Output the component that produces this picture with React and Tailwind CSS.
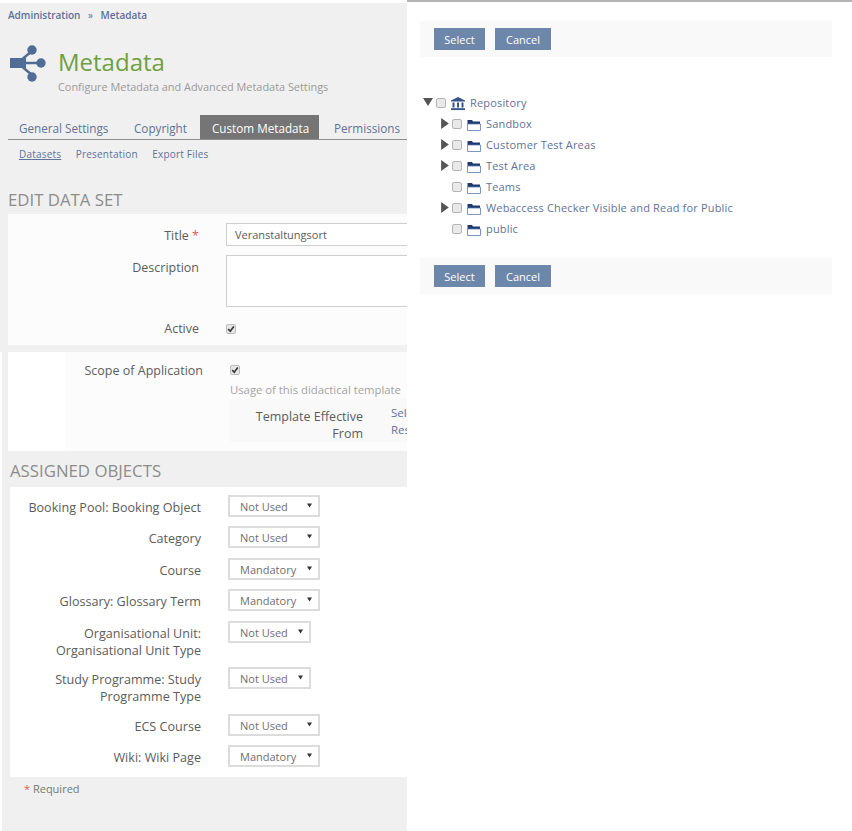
import React from 'react';

const FONT = "font-['Open_Sans',sans-serif]";

// checkbox with check mark (left form) or empty (tree)
function Check({ checked, className = '' }) {
  if (checked) {
    return (
      <span className={`flex w-[10px] h-[10px] items-center justify-center rounded-[2px] border border-[#bdbdbd] bg-[#e6e6e6] ${className}`}>
        <svg viewBox="0 0 10 10" className="w-[8px] h-[8px]">
          <path d="M1.5 5 L4 7.8 L8.5 1.8" fill="none" stroke="#333" strokeWidth="2" />
        </svg>
      </span>
    );
  }
  return <span className={`block w-[10px] h-[10px] rounded-[2px] border border-[#b5b5b5] bg-[#e9e9e9] ${className}`} />;
}

function Select({ value, wide = true }) {
  return (
    <div className={`flex items-center justify-between h-[22px] border-2 border-[#dcdcdc] bg-white pl-[10px] text-[11px] text-[#6f6f6f] ${wide ? 'w-[92px] pr-[6px]' : 'w-[83px] pr-[6px]'}`}>
      <span className="pt-[2px]">{value}</span>
      <svg viewBox="0 0 6 5" className="w-[5px] h-[5px] mb-[2px]"><path d="M0 0H6L3 5Z" fill="#333" /></svg>
    </div>
  );
}

function AssignedRow({ label, value, wide, h }) {
  return (
    <div className="flex" style={{ height: h }}>
      <div className="w-[191px] pt-[4px] text-right text-[12.6px] leading-[17px] text-[#5c5c5c]">{label}</div>
      <div className="ml-[27px]"><Select value={value} wide={wide} /></div>
    </div>
  );
}

function Toolbar() {
  return (
    <div className="flex gap-[10px] h-[36px] items-center px-[14px] bg-[#f9f9f9]">
      <button className="w-[51px] h-[22px] pt-[2px] bg-[#6d87ab] text-[11px] text-white">Select</button>
      <button className="w-[56px] h-[22px] pt-[2px] bg-[#6d87ab] text-[11px] text-white">Cancel</button>
    </div>
  );
}

function Folder() {
  return (
    <svg viewBox="0 0 14 12" className="w-[14px] h-[12px] shrink-0">
      <path d="M0.5 1H5L6 2.5H13V5H0.5Z" fill="#1c3a70" />
      <path d="M0.5 5H13.5V11.5H0.5Z" fill="#fff" stroke="#5a7cae" strokeWidth="0.8" />
    </svg>
  );
}

function Bank() {
  return (
    <svg viewBox="0 0 14 13" className="w-[14px] h-[13px] shrink-0" fill="#34548a">
      <path d="M7 0L14 3.4V4.5H0V3.4Z" />
      <rect x="1.5" y="5.5" width="2" height="5" />
      <rect x="6" y="5.5" width="2" height="5" />
      <rect x="10.5" y="5.5" width="2" height="5" />
      <rect x="0" y="11.2" width="14" height="1.8" />
    </svg>
  );
}

function TreeRow({ label, arrow }) {
  return (
    <div className="flex items-center h-[21px] pl-[21px]">
      <span className="w-[11px] shrink-0 mb-[2px]">
        {arrow && <svg viewBox="0 0 7 10" className="w-[8px] h-[11px]"><path d="M0 0L7 5L0 10Z" fill="#555" /></svg>}
      </span>
      <Check className="mb-[2px]" />
      <span className="ml-[5px]"><Folder /></span>
      <span className="ml-[5px] text-[11px] tracking-[0.17px] text-[#5f7399]">{label}</span>
    </div>
  );
}

const TREE = [
  { label: 'Sandbox', arrow: true },
  { label: 'Customer Test Areas', arrow: true },
  { label: 'Test Area', arrow: true },
  { label: 'Teams', arrow: false },
  { label: 'Webaccess Checker Visible and Read for Public', arrow: true },
  { label: 'public', arrow: false },
];

const ASSIGNED = [
  { label: 'Booking Pool: Booking Object', value: 'Not Used', wide: true, h: 31 },
  { label: 'Category', value: 'Not Used', wide: true, h: 32 },
  { label: 'Course', value: 'Mandatory', wide: true, h: 31 },
  { label: 'Glossary: Glossary Term', value: 'Mandatory', wide: true, h: 32 },
  { label: <>Organisational Unit:<br />Organisational Unit Type</>, value: 'Not Used', wide: false, h: 46 },
  { label: <>Study Programme: Study<br />Programme Type</>, value: 'Not Used', wide: false, h: 47 },
  { label: 'ECS Course', value: 'Not Used', wide: true, h: 31 },
  { label: 'Wiki: Wiki Page', value: 'Mandatory', wide: true, h: 32 },
];

export default function App() {
  return (
    <div className={`flex w-[852px] h-[831px] overflow-hidden bg-white ${FONT}`}>

      {/* left: administration form */}
      <div className="w-[407px] shrink-0 overflow-hidden pt-[3px]">

        {/* upper part runs to the window edge */}
        <div className="h-[349px] bg-[#f0f0f0] overflow-hidden">
          <div className="pl-[8px] pt-[6px] h-[42px] text-[10px] leading-[13px] font-semibold text-[#5a7099]">
            Administration <span className="mx-[5px] font-normal">»</span> Metadata
          </div>

          {/* title */}
          <div className="flex h-[55px] pl-[10px]">
            <svg viewBox="0 0 37 38" className="w-[37px] h-[38px] shrink-0">
              <g fill="#4f6d95" stroke="#4f6d95">
                <rect x="0" y="13" width="16" height="10" strokeWidth="0" />
                <path d="M10 16L22 6M10 18H31M10 20L22 30" strokeWidth="2.4" fill="none" />
                <circle cx="22" cy="5" r="4.7" strokeWidth="0" />
                <circle cx="31" cy="18" r="4.7" strokeWidth="0" />
                <circle cx="22" cy="32" r="4.7" strokeWidth="0" />
              </g>
            </svg>
            <div className="ml-[11px]">
              <div className="text-[24px] leading-[33px] text-[#6fa03e]">Metadata</div>
              <div className="text-[10.9px] leading-[16px] mt-[1px] text-[#9a9a9a]">Configure Metadata and Advanced Metadata Settings</div>
            </div>
          </div>

          {/* tabs */}
          <div className="flex ml-[8px] mt-[15px] h-[25px] border-b border-[#8f8f8f] text-[11.7px] text-[#5f7399] whitespace-nowrap">
            <div className="pl-[11px] pt-[5px] w-[115px]">General Settings</div>
            <div className="pl-[11px] pt-[5px] w-[77px]">Copyright</div>
            <div className="pl-[12px] pt-[5px] w-[119px] bg-[#757575] text-white">Custom Metadata</div>
            <div className="pl-[15px] pt-[5px]">Permissions</div>
          </div>

          {/* sub tabs */}
          <div className="flex gap-[14.5px] ml-[19px] mt-[8px] h-[14px] text-[10px] leading-[13px] tracking-[0.2px] text-[#5f7399]">
            <span className="underline">Datasets</span>
            <span>Presentation</span>
            <span>Export Files</span>
          </div>

          <h2 className="ml-[8px] mt-[27px] h-[25px] text-[16.8px] leading-[22px] text-[#8c8c8c] uppercase">Edit Data Set</h2>

          {/* edit card */}
          <div className="ml-[8px] h-[131px] bg-[#fcfcfc] text-[12.5px] text-[#5c5c5c] overflow-hidden">
            <div className="flex h-[41px] pt-[9px]">
              <div className="w-[191px] shrink-0 text-right leading-[25px]">Title <span className="text-[#e05a5a]">*</span></div>
              <div className="ml-[27px] h-[23px] w-[300px] shrink-0 border border-[#cfcfcf] bg-white pl-[8px] text-[11px] leading-[21px]">Veranstaltungsort</div>
            </div>
            <div className="flex h-[52px]">
              <div className="w-[191px] shrink-0 text-right leading-[26px]">Description</div>
              <div className="ml-[27px] h-[52px] w-[300px] shrink-0 border border-[#cfcfcf] bg-white" />
            </div>
            <div className="flex items-center mt-[13px] h-[18px]">
              <div className="w-[191px] shrink-0 text-right">Active</div>
              <Check checked className="ml-[27px]" />
            </div>
          </div>
        </div>

        {/* lower part leaves a small white strip on the left */}
        <div className="ml-[2px] h-[479px] bg-[#f0f0f0] overflow-hidden">
          <div className="ml-[6px] h-[99px] flex bg-white text-[12.5px] text-[#5c5c5c] overflow-hidden">
            <div className="w-[57px] shrink-0" />
            <div className="flex-1 bg-[#fcfcfc] flex">
              <div className="w-[138px] shrink-0 pt-[10px] text-right leading-[18px]">Scope of Application</div>
              <div className="ml-[27px] flex-1 min-w-0 whitespace-nowrap">
                <Check checked className="mt-[13px]" />
                <div className="mt-[7px] text-[11.3px] leading-[15px] text-[#a3a3a3]">Usage of this didactical template</div>
                <div className="mt-[2px] flex h-[43px] bg-[#f9f9f9]">
                  <div className="w-[133px] shrink-0 pt-[9px] text-right leading-[17px]">Template Effective<br />From</div>
                  <div className="ml-[28px] pt-[5px] text-[11.5px] leading-[17px] text-[#5f7399]">Sel<br />Res</div>
                </div>
              </div>
            </div>
          </div>

          <h2 className="ml-[8px] mt-[8px] h-[28px] text-[16.8px] leading-[24px] text-[#8c8c8c] uppercase">Assigned Objects</h2>

          {/* assigned objects */}
          <div className="ml-[8px] h-[290px] bg-white pt-[8px] overflow-hidden">
            {ASSIGNED.map((row, i) => <AssignedRow key={i} {...row} />)}
          </div>

          <div className="ml-[22px] mt-[4px] text-[11px] leading-[15px] text-[#777]">
            <span className="text-[#e05a5a]">*</span> Required
          </div>
        </div>
      </div>

      {/* right: repository selector */}
      <div className="flex-1 border-t-2 border-[#b4b4b4] pl-[13px] pr-[20px] pt-[19px]">
        <Toolbar />
        <div className="mt-[36px]">
          <div className="flex items-center h-[21px] pl-[3px]">
            <span className="w-[13px] shrink-0 mb-[3px]">
              <svg viewBox="0 0 10 8" className="w-[10px] h-[8px]"><path d="M0 0H10L5 8Z" fill="#555" /></svg>
            </span>
            <Check className="mb-[2px]" />
            <span className="ml-[5px]"><Bank /></span>
            <span className="ml-[5px] text-[11px] tracking-[0.17px] text-[#5f7399]">Repository</span>
          </div>
          {TREE.map(item => <TreeRow key={item.label} {...item} />)}
        </div>
        <div className="mt-[18px]"><Toolbar /></div>
      </div>
    </div>
  );
}
